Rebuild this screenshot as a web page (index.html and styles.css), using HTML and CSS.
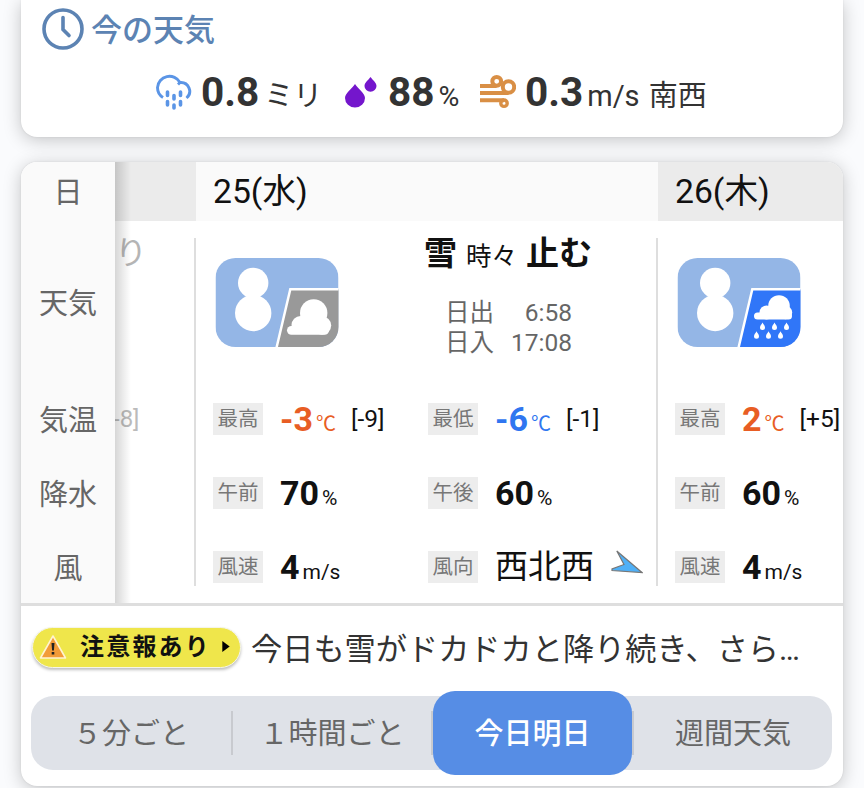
FILE: index.html
```html
<!DOCTYPE html>
<html lang="ja">
<head>
  <meta charset="UTF-8">
  <title>今の天気</title>
  <link rel="stylesheet" href="styles.css">
</head>
<body>

  <!-- Current weather -->
  <section class="card now">
    <h2 class="now-title">
      <svg class="clock" viewBox="0 0 42 42">
        <circle cx="21" cy="21" r="19"/>
        <path d="M21 9.500v12l6 6"/>
      </svg>
      <span>今の天気</span>
    </h2>
    <div class="now-values">
      <div class="now-item rain">
        <svg class="icon" viewBox="0 0 36 36" fill="none" stroke="#5b95e6" stroke-width="2.900">
          <path d="M7 23.500C3 21 1.500 17.500 1.500 13.500A12 12 0 0 1 24 8.500A8.800 8.800 0 0 1 30.500 24"/>
          <path d="M24 8.500l-2 2"/>
          <path stroke-width="3.600" stroke-linecap="round" d="M11.500 18v3.500M18 21.500v3.500M24.500 18v3.500M11.500 27.500v3.500M18 31v3M24.500 27.500v3.500"/>
        </svg>
        <b>0.8</b><span>ミリ</span>
      </div>
      <div class="now-item humidity">
        <svg class="icon drops" viewBox="0 0 32 32" fill="#7416cc">
          <path d="M10 8C7 13 0 17 0 22a10 9.500 0 0 0 20 0C20 17 13 13 10 8z"/>
          <path d="M25.500 1C23.500 4 19.500 6.500 19.500 10a6 5.700 0 0 0 12 0C31.500 6.500 27.500 4 25.500 1z"/>
        </svg>
        <b>88</b><span>%</span>
      </div>
      <div class="now-item wind">
        <svg class="icon" viewBox="0 0 36 36" fill="none" stroke="#d98f45" stroke-width="4">
          <path d="M0 12h16.500M0 19h28.500M0 26.300h24"/>
          <circle cx="16.700" cy="7.300" r="4.400"/>
          <circle cx="28.500" cy="13" r="5.700"/>
          <circle cx="24" cy="29.200" r="3.200" stroke-width="3.400"/>
        </svg>
        <b>0.3</b><span>m/s 南西</span>
      </div>
    </div>
  </section>

  <!-- Forecast -->
  <section class="card forecast">
    <div class="table">
      <div class="labels">
        <div class="label-day">日</div>
        <div class="label-weather">天気</div>
        <div class="label-row">気温</div>
        <div class="label-row">降水</div>
        <div class="label-row">風</div>
      </div>

      <div class="days">
        <div class="day prev">
          <div class="date"></div>
          <div class="day-body">
            <div class="weather"><span class="prev-name">り</span></div>
            <div class="row"><span class="diff">-8]</span></div>
          </div>
        </div>

        <div class="day today">
          <div class="date">25(水)</div>
          <div class="day-body">
            <div class="weather">
              <svg class="weather-icon" viewBox="0 0 123 89">
                <clipPath id="round1"><rect width="123" height="89" rx="20"/></clipPath>
                <g clip-path="url(#round1)">
                  <path fill="#94b6e6" d="M0 0h123v89H0z"/>
                  <path fill="#999" stroke="#fff" stroke-width="2.500" d="M74.800 31.300H126V92H60.500z"/>
                </g>
                <g fill="#fff">
                  <circle cx="37.700" cy="25" r="15.200"/>
                  <circle cx="37.700" cy="55" r="18.200"/>
                  <path d="M31 37h13.500v5H31z"/>
                  <circle cx="98.200" cy="55" r="13.700"/>
                  <circle cx="85" cy="67" r="9"/>
                  <circle cx="106.500" cy="67.500" r="9.200"/>
                  <rect x="71.500" y="68" width="42" height="8.700" rx="4.350"/>
                </g>
              </svg>
              <div class="summary">
                <div class="names"><b>雪</b><small>時々</small><b>止む</b></div>
                <div class="sun"><span>日出</span><span>6:58</span></div>
                <div class="sun"><span>日入</span><span>17:08</span></div>
              </div>
            </div>
            <div class="row">
              <div class="cell"><span class="chip">最高</span><b class="high">-3</b><span class="unit high deg">℃</span><span class="diff">[-9]</span></div>
              <div class="cell"><span class="chip">最低</span><b class="low">-6</b><span class="unit low deg">℃</span><span class="diff">[-1]</span></div>
            </div>
            <div class="row">
              <div class="cell"><span class="chip">午前</span><b>70</b><span class="unit">%</span></div>
              <div class="cell"><span class="chip">午後</span><b>60</b><span class="unit">%</span></div>
            </div>
            <div class="row">
              <div class="cell"><span class="chip">風速</span><b>4</b><span class="unit">m/s</span></div>
              <div class="cell"><span class="chip">風向</span><span class="direction">西北西</span>
                <svg class="arrow" viewBox="0 0 32 24"><path d="M5.800 1L31 22.500 1 20.500v-1.500l12-4.500z"/></svg>
              </div>
            </div>
          </div>
        </div>

        <div class="day tomorrow">
          <div class="date">26(木)</div>
          <div class="day-body">
            <div class="weather">
              <svg class="weather-icon" viewBox="0 0 123 89">
                <clipPath id="round2"><rect width="123" height="89" rx="20"/></clipPath>
                <g clip-path="url(#round2)">
                  <path fill="#94b6e6" d="M0 0h123v89H0z"/>
                  <path fill="#3076f8" stroke="#fff" stroke-width="2.500" d="M74.800 31.300H126V92H60.500z"/>
                </g>
                <g fill="#fff">
                  <circle cx="37.700" cy="25" r="15.200"/>
                  <circle cx="37.700" cy="55" r="18.200"/>
                  <path d="M31 37h13.500v5H31z"/>
                  <circle cx="101.500" cy="48" r="10.800"/>
                  <circle cx="89" cy="54.500" r="7"/>
                  <circle cx="108" cy="54.500" r="6.700"/>
                  <rect x="76.500" y="54.500" width="38" height="7" rx="3.500"/>
                  <path id="drop" d="M85 64.500c-1 2-2.500 3.300-2.500 5a2.500 2.500 0 0 0 5 0c0-1.700-1.500-3-2.500-5z"/>
                  <use href="#drop" x="12"/>
                  <use href="#drop" x="24"/>
                  <use href="#drop" x="-6" y="8.800"/>
                  <use href="#drop" x="6" y="8.800"/>
                  <use href="#drop" x="18" y="8.800"/>
                </g>
              </svg>
            </div>
            <div class="row">
              <div class="cell"><span class="chip">最高</span><b class="high">2</b><span class="unit high deg">℃</span><span class="diff">[+5]</span></div>
            </div>
            <div class="row">
              <div class="cell"><span class="chip">午前</span><b>60</b><span class="unit">%</span></div>
            </div>
            <div class="row">
              <div class="cell"><span class="chip">風速</span><b>4</b><span class="unit">m/s</span></div>
            </div>
          </div>
        </div>
      </div>
    </div>

    <div class="alert">
      <div class="badge">
        <svg class="warning" viewBox="0 0 28 26">
          <path fill="#f29b38" stroke="#fff3d0" stroke-width="1.600" stroke-linejoin="round" d="M14 2L26.500 24h-25z"/>
          <path fill="#222" d="M12.500 9h3l-.6 7.500h-1.800zM12.700 18h2.600v2.500h-2.600z"/>
        </svg>
        <span>注意報あり</span>
        <svg class="more" viewBox="0 0 8 12"><path d="M0 0l8 6-8 6z"/></svg>
      </div>
      <p>今日も雪がドカドカと降り続き、さら…</p>
    </div>

    <nav class="tabs">
      <div class="tab">５分ごと</div>
      <div class="tab hourly">１時間ごと</div>
      <div class="tab active">今日明日</div>
      <div class="tab weekly">週間天気</div>
    </nav>
  </section>

</body>
</html>
```

FILE: styles.css
```css
* {
  box-sizing: border-box;
}
body {
  margin: 0;
  height: 788px;
  padding: 0 21px;
  overflow: hidden;
  background: #fafbfd;
  font-family: Roboto, "Noto Sans CJK JP", sans-serif;
  color: #111;
}
svg {
  display: block;
  flex: none;
}
.card {
  background: #fff;
  border-radius: 16px;
  box-shadow: 0 3px 18px rgba(0,0,0,0.22), 0 0 2px rgba(0,0,0,0.1);
}

/* current weather */
.now {
  height: 137px;
  border-radius: 0 0 16px 16px;
  padding: 7px 21px 0;
  color: #333;
}
.now-title {
  display: flex;
  align-items: center;
  gap: 7px;
  margin: 0;
  height: 43px;
  font-size: 31px;
  font-weight: 500;
  line-height: 43px;
  color: #5c83b3;
}
.now-title span {
  padding-top: 3px;
}
.clock {
  width: 42px;
  height: 42px;
  fill: none;
  stroke: #5c83b3;
  stroke-width: 3.6;
  stroke-linecap: round;
}
.now-values {
  display: flex;
  margin: 18px 0 0 114px;
  height: 48px;
}
.now-item {
  display: flex;
  align-items: baseline;
  font-size: 29px;
  line-height: 48px;
  white-space: pre;
}
.now-item b {
  margin-left: 9px;
  font-size: 40.5px;
}
.now-item .icon {
  width: 36px;
  height: 36px;
  align-self: center;
}
.rain {
  width: 189px;
}
.rain span {
  margin-left: 5px;
}
.humidity {
  width: 135px;
}
.now-item .drops {
  width: 32px;
  height: 32px;
}
.humidity b {
  margin-left: 11px;
}
.humidity span {
  margin-left: 4px;
  font-size: 28.5px;
}
.wind span {
  margin-left: 4px;
  word-spacing: 2px;
}

/* forecast table */
.forecast {
  height: 624px;
  margin-top: 25px;
  overflow: hidden;
}
.table {
  display: flex;
  height: 444px;
  border-bottom: 3px solid #dedede;
}
.labels {
  position: relative;
  width: 94px;
  flex: none;
  background: #fafafa;
  font-size: 29px;
  text-align: center;
  color: #666;
}
/* shade cast on the scrolled days */
.labels::after {
  content: "";
  position: absolute;
  top: 0;
  left: 100%;
  width: 16px;
  height: 441px;
  background: linear-gradient(to right, rgba(0,0,0,0.16), rgba(0,0,0,0.08) 50%, transparent);
}
.label-day {
  height: 59px;
  line-height: 62px;
}
.label-weather {
  height: 162px;
  line-height: 166px;
}
.label-row {
  height: 74px;
  line-height: 77px;
}
.days {
  display: flex;
  flex: 1;
  overflow: hidden;
}
.day {
  width: 462px;
  flex: none;
}
.prev {
  width: 81px;
}
.date {
  height: 59px;
  padding-left: 17px;
  background: #ebebeb;
  font-size: 33.7px;
  line-height: 60px;
}
.today .date {
  background: #fafafa;
}
.day-body {
  height: 382px;
  background: linear-gradient(#dedede, #dedede) no-repeat right 17px / 2px 348px;
}
.tomorrow .day-body {
  background: none;
}
.weather {
  display: flex;
  height: 161px;
  padding: 37px 0 0 19px;
}
.weather-icon {
  width: 124px;
  height: 89px;
}
.summary {
  width: 170px;
  margin: -25px 0 0 85px;
}
.names {
  display: flex;
  align-items: baseline;
  gap: 9px;
  height: 52px;
  margin-bottom: 13px;
  line-height: 42px;
  white-space: nowrap;
}
.names b {
  font-size: 33px;
}
.names small {
  font-size: 25.5px;
}
.sun {
  display: flex;
  justify-content: space-between;
  margin: 0 22px 0 21px;
  font-size: 24.5px;
  line-height: 30px;
  color: #666;
}
.row {
  display: flex;
  height: 74px;
  padding-left: 17px;
}
.cell {
  display: flex;
  width: 215px;
  flex: none;
  align-items: baseline;
  line-height: 74px;
  white-space: nowrap;
}
.chip {
  width: 50px;
  height: 32px;
  margin-right: 17px;
  align-self: center;
  background: #ededed;
  font-size: 20.5px;
  line-height: 33px;
  text-align: center;
  color: #777;
}
.cell b {
  font-size: 34px;
}
.unit {
  margin-left: 3px;
  font-size: 21px;
}
.deg {
  width: 20px;
  font-size: 20px;
}
.diff {
  align-self: center;
  margin-left: 15px;
  font-size: 24.5px;
}
.high {
  color: #e85d24;
}
.low {
  color: #3076f0;
}
.direction {
  font-size: 33px;
}
.arrow {
  width: 32px;
  height: 24px;
  margin: 0 0 10px 17px;
  align-self: center;
  fill: #4fb0f7;
  stroke: #777;
  stroke-width: 1.2;
}
.prev .weather {
  padding: 13px 0 0;
}
.prev .row {
  padding: 0;
}
.prev-name {
  font-size: 32px;
  line-height: 38px;
  color: #b5b5b5;
}
.prev .diff {
  margin-left: -2px;
  font-size: 24px;
  line-height: 74px;
  color: #bbb;
}

/* alert line */
.alert {
  display: flex;
  align-items: center;
  height: 82px;
  padding-left: 11px;
}
.badge {
  display: flex;
  align-items: center;
  width: 209px;
  height: 41px;
  border: 1px solid #f5f5e8;
  border-radius: 21px;
  background: #efe64b;
  box-shadow: 0 2px 3px rgba(0,0,0,0.25);
  font-size: 24px;
  font-weight: bold;
  letter-spacing: 2.2px;
  line-height: 38px;
}
.warning {
  width: 28px;
  height: 26px;
  margin: 0 13px 0 6px;
}
.more {
  width: 8px;
  height: 11px;
  margin: 0 0 2px 11px;
}
.alert p {
  margin: 0 0 0 10px;
  padding-top: 5px;
  font-size: 31.2px;
  line-height: 40px;
  color: #333;
  white-space: nowrap;
}

/* tabs */
.tabs {
  display: flex;
  align-items: center;
  height: 74px;
  margin: 8px 11px 0 10px;
  border-radius: 22px;
  background: #dfe2e8;
}
.tab {
  width: 200px;
  height: 44px;
  font-size: 29px;
  line-height: 47px;
  text-align: center;
  color: #666;
}
.tab.hourly {
  width: 202px;
  border: solid #c8cacf;
  border-width: 0 2px;
}
.tab.weekly {
  border-left: 2px solid #c8cacf;
}
.tab.active {
  width: 199px;
  height: 84px;
  border-radius: 22px;
  background: #568de5;
  font-weight: 500;
  line-height: 87px;
  color: #fff;
}
```
